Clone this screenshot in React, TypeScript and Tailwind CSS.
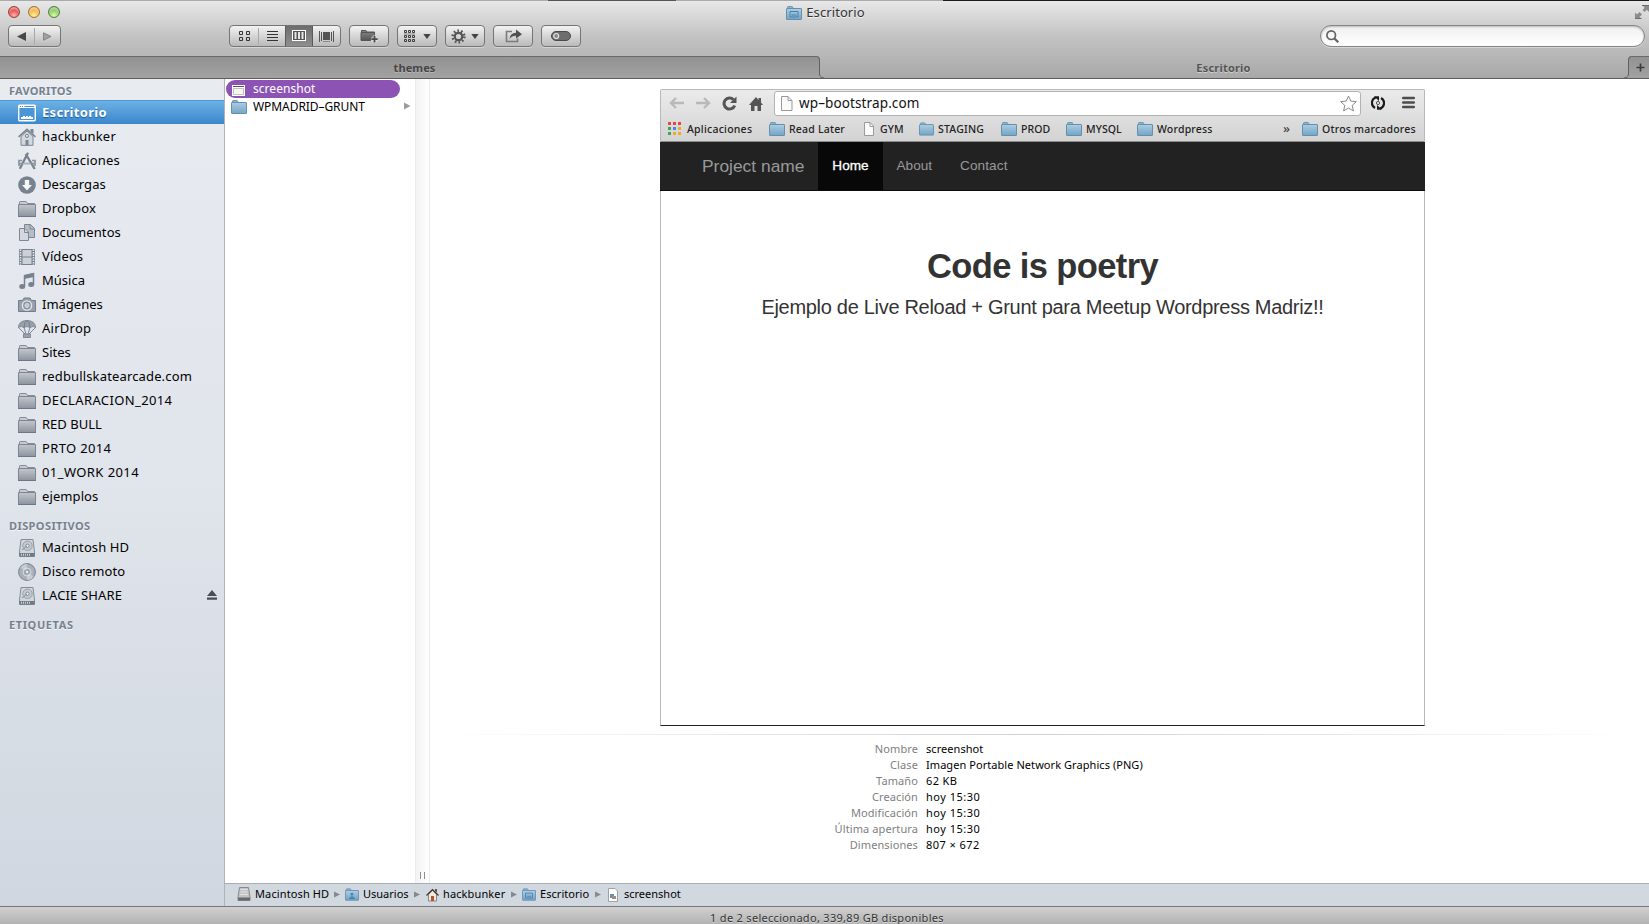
import type { ReactNode } from "react";

const UI = "font-['Noto_Sans','Open_Sans',sans-serif]";
const HELV = "font-['Liberation_Sans',Arial,sans-serif]";

function Gradients() {
  return (
    <svg className="absolute h-0 w-0" aria-hidden="true">
      <defs>
        <linearGradient id="steel" x1="0" y1="0" x2="0" y2="1">
          <stop offset="0" stopColor="#c3c7cd" />
          <stop offset="1" stopColor="#8d949e" />
        </linearGradient>
        <linearGradient id="sky" x1="0" y1="0" x2="0" y2="1">
          <stop offset="0" stopColor="#abcde3" />
          <stop offset="1" stopColor="#74a4c5" />
        </linearGradient>
        <linearGradient id="ink" x1="0" y1="0" x2="0" y2="1">
          <stop offset="0" stopColor="#888" />
          <stop offset="1" stopColor="#555" />
        </linearGradient>
        <linearGradient id="tab" x1="0" y1="0" x2="0" y2="1">
          <stop offset="0" stopColor="#929292" />
          <stop offset="1" stopColor="#a2a2a2" />
        </linearGradient>
      </defs>
    </svg>
  );
}

function Icon({ w = 18, h = 18, vb, className = "", children }: { w?: number; h?: number; vb?: string; className?: string; children: ReactNode }) {
  return (
    <svg width={w} height={h} viewBox={vb ?? `0 0 ${w} ${h}`} fill="none" className={`shrink-0 ${className}`}>
      {children}
    </svg>
  );
}

/* Sidebar icons */
const GreyFolder = () => (
  <Icon>
    <path d="M1.500 4V2.200Q1.500 1.500 2.200 1.500H7.800Q8.500 1.500 8.800 2.300L9.500 3.500H16.500V5H1.500Z" fill="#c7cbd1" stroke="#848b96" />
    <path d="M.5 4.500H17.500V16.500H.5Z" fill="url(#steel)" stroke="#7f8692" />
    <path d="M0 16.500H18" stroke="#6e7785" />
  </Icon>
);
const DesktopIcon = () => (
  <Icon>
    <rect x=".7" y="1.200" width="16.600" height="15.600" rx="1" fill="#4a96d6" stroke="#fff" strokeWidth="1.400" />
    <path d="M1 2.800H17" stroke="#fff" strokeWidth="2.400" />
    <path d="M2 2.500h1M4 2.500h1M6.500 2.500h9.500" stroke="#4c8fc9" strokeWidth="1" />
    <path d="M3 15V13H5V12H7V13H8V12H10V13H11V12H13V13H15V15Z" fill="#fff" />
  </Icon>
);
const HomeIcon = () => (
  <Icon>
    <path d="M3 8.500V17.300H15V8.500L9 3Z" fill="#d3d7de" stroke="#7d8693" />
    <path d="M.6 8.900L9 1.400L17.400 8.900" stroke="#7d8693" strokeWidth="1.600" />
    <path d="M12.500 1H15.500V6L12.500 3.500Z" fill="#7d8693" />
    <circle cx="9" cy="7.900" r="1.600" stroke="#7d8693" fill="#dde1e7" />
    <path d="M7.500 17.500V12H10.500V17.500Z" fill="#7d8693" />
  </Icon>
);
const AppsIcon = () => (
  <Icon>
    <path d="M10 .8L1.800 16.800M7.700 2L16.700 17" stroke="#78818e" strokeWidth="2.300" />
    <path d="M1 14V8.500H4M14 8.500H17V14M.8 11.500H17" stroke="#8b939f" strokeWidth="1.700" />
    <path d="M5 12H13" stroke="#c8cdd4" strokeWidth="1" />
  </Icon>
);
const DownIcon = () => (
  <Icon>
    <circle cx="9" cy="9" r="8.800" fill="#78818e" />
    <path d="M6.800 4H11.200V9H14L9 14.500L4 9H6.800Z" fill="#f4f6f8" />
  </Icon>
);
const DocsIcon = () => (
  <Icon>
    <path d="M6.500 .5H12.500L16.500 4.500V13.500H6.500Z" fill="#b7bdc6" stroke="#7d8693" />
    <path d="M12 .5V5H16.500" stroke="#7d8693" />
    <path d="M1.500 4.500H7L10.500 8V16.500H1.500Z" fill="#d4d8de" stroke="#7d8693" />
    <path d="M6.500 4.500V8.500H10.500" stroke="#7d8693" />
  </Icon>
);
const FilmIcon = () => (
  <Icon>
    <rect x="1" y="1" width="16" height="16" fill="#79818d" />
    <path d="M2.500 1.500V17M15.500 1.500V17" stroke="#e6e9ee" strokeWidth="1.600" strokeDasharray="1.500 1" />
    <path d="M4.500 2H13.500V8.500H4.500ZM4.500 9.500H13.500V16H4.500Z" fill="#ccd1d8" />
  </Icon>
);
const MusicIcon = () => (
  <Icon>
    <path d="M6.500 14V3.800L15.500 1.800V12" stroke="#78818e" strokeWidth="1.500" />
    <path d="M6 3L16 .8V5L6 7Z" fill="#78818e" />
    <ellipse cx="4.200" cy="14.400" rx="3" ry="2.500" fill="#78818e" />
    <ellipse cx="13.200" cy="12.400" rx="3" ry="2.500" fill="#78818e" />
  </Icon>
);
const CameraIcon = () => (
  <Icon>
    <path d="M.5 4.500H4.500L6 2H12L13.500 4.500H17.500V15.500H.5Z" fill="#98a0ab" stroke="#747d8a" />
    <circle cx="9" cy="9.500" r="4.600" fill="#87909c" stroke="#e4e8ed" strokeWidth="1.400" />
    <circle cx="9" cy="9.500" r="2.200" fill="#c2c8d0" stroke="#e4e8ed" strokeWidth=".6" />
  </Icon>
);
const AirDropIcon = () => (
  <Icon>
    <path d="M.3 7.500Q1 .5 9 .5Q17 .5 17.700 7.500Q15 5.500 12 7.500Q9 5.500 6 7.500Q3 5.500 .3 7.500Z" fill="#98a0ab" stroke="#737c89" strokeWidth=".8" />
    <path d="M6 7.500Q6 2 9 .5Q12 2 12 7.500M.5 7.500L7 14M17.500 7.500L11 14M6 7.500L8 14M12 7.500L10 14" stroke="#737c89" strokeWidth=".9" />
    <rect x="5.500" y="14" width="7" height="3.500" fill="#9aa2ad" stroke="#737c89" strokeWidth=".8" />
  </Icon>
);
const DriveIcon = () => (
  <Icon>
    <path d="M3 .5H15L16.500 13V17.500H1.500V13Z" fill="#d2d6dc" stroke="#848c98" />
    <path d="M1.500 14H16.500V17.500H1.500Z" fill="#707986" />
    <path d="M3 15.700H12" stroke="#cfd4da" strokeWidth="2" strokeDasharray="1 1" />
    <circle cx="9.500" cy="6.800" r="4.700" fill="#c4c9d1" stroke="#9aa1ab" />
    <circle cx="9.500" cy="6.800" r="1.700" fill="#e9ecef" stroke="#868e9a" />
    <path d="M4 11L9 7" stroke="#868e9a" />
  </Icon>
);
const DiscIcon = () => (
  <Icon>
    <circle cx="9" cy="9" r="8.400" fill="#a9b0ba" stroke="#78818e" />
    <path d="M9 9L2.500 4.500Q5 1 9 1ZM9 9L15.500 13.500Q13 17 9 17Z" fill="#c8cdd4" />
    <circle cx="9" cy="9" r="4" stroke="#dfe3e8" strokeWidth=".8" />
    <circle cx="9" cy="9" r="2" fill="#e6e9ed" stroke="#78818e" strokeWidth=".8" />
  </Icon>
);

/* Folder used across the columns, bookmarks and path bar */
function BlueFolder({ w = 16, h = 14, mark }: { w?: number; h?: number; mark?: "desk" | "user" }) {
  return (
    <Icon w={w} h={h} vb="0 0 16 14">
      <path d="M1.500 3V1.200Q1.500 .5 2.200 .5H5.800Q6.500 .5 6.700 1.300L7 2.500H14.500V4H1.500Z" fill="#8db5cf" stroke="#6c96b3" />
      <rect x=".5" y="2.500" width="15" height="11" rx=".5" fill="url(#sky)" stroke="#648fad" />
      <path d="M1 3.500H15" stroke="#a9cbe0" />
      {mark === "desk" && <path d="M4 5.500H12V11H4ZM5.500 9H10.500" stroke="#4883ab" />}
      {mark === "user" && <path d="M8 5A1.700 1.700 0 1 1 7.900 5ZM4.500 12Q5 9 8 9Q11 9 11.500 12Z" fill="#4c85ab" />}
    </Icon>
  );
}
const PageIcon = () => (
  <Icon w={12} h={14}>
    <path d="M1.500 .5H7L10.500 4V13.500H1.500Z" fill="#fbfbfb" stroke="#9a9a9a" />
    <path d="M7 .5V4.500H10.500" stroke="#9a9a9a" />
  </Icon>
);
const Arrow = () => (
  <Icon w={6} h={7}>
    <path d="M0 .5L6 3.500L0 6.500Z" fill="#858a91" />
  </Icon>
);

const FAVORITES: [ReactNode, string, string][] = [
  [<HomeIcon />, "hackbunker", "tracking-[0.17px]"],
  [<AppsIcon />, "Aplicaciones", "tracking-[0.2px]"],
  [<DownIcon />, "Descargas", "tracking-[0.05px]"],
  [<GreyFolder />, "Dropbox", "tracking-[0.15px]"],
  [<DocsIcon />, "Documentos", "tracking-[0.1px]"],
  [<FilmIcon />, "Vídeos", "tracking-[0.1px]"],
  [<MusicIcon />, "Música", ""],
  [<CameraIcon />, "Imágenes", ""],
  [<AirDropIcon />, "AirDrop", "tracking-[0.25px]"],
  [<GreyFolder />, "Sites", ""],
  [<GreyFolder />, "redbullskatearcade.com", "tracking-[0.15px]"],
  [<GreyFolder />, "DECLARACION_2014", "tracking-[0.38px]"],
  [<GreyFolder />, "RED BULL", ""],
  [<GreyFolder />, "PRTO 2014", "tracking-[0.35px]"],
  [<GreyFolder />, "01_WORK 2014", "tracking-[0.42px]"],
  [<GreyFolder />, "ejemplos", "tracking-[0.1px]"],
];

function SideRow({ icon, label, track = "", eject }: { icon: ReactNode; label: string; track?: string; eject?: boolean }) {
  return (
    <li className="flex h-6 items-center pl-[18px] pr-[7px] text-[13px] text-black">
      <span className="-mt-px flex">{icon}</span>
      <span className={`ml-1.5 flex-1 whitespace-nowrap ${track}`}>{label}</span>
      {eject && (
        <Icon w={10} h={10} className="-mt-0.5">
          <path d="M5 0L10 6H0ZM0 7.500H10V9.700H0Z" fill="#4b4e53" />
        </Icon>
      )}
    </li>
  );
}

function SideHeader({ children, className = "" }: { children: ReactNode; className?: string }) {
  return <h2 className={`pl-[9px] text-[11px] font-bold text-[#76818f] [text-shadow:0_1px_0_#f5f7fa] ${className}`}>{children}</h2>;
}

function Sidebar() {
  return (
    <aside className="w-[225px] shrink-0 border-r border-[#b0b3b8] bg-linear-to-b from-[#e8ecf1] via-[#e0e4eb] to-[#d0d7e0]">
      <SideHeader className="h-[21px] leading-[24px] tracking-[0.2px]">FAVORITOS</SideHeader>
      <div className="flex h-6 items-center border-t border-[#4a9ad6] bg-linear-to-b from-[#6cb1e5] to-[#3a87cd] pl-[18px]">
        <DesktopIcon />
        <span className="ml-1.5 text-[13px] font-bold tracking-[0.32px] text-white [text-shadow:0_1px_1px_#1d5b96]">Escritorio</span>
      </div>
      <ul className="pt-px">
        {FAVORITES.map(([icon, label, track]) => (
          <SideRow key={label} icon={icon} label={label} track={track} />
        ))}
      </ul>
      <SideHeader className="h-[27px] leading-[34px] tracking-[0.4px]">DISPOSITIVOS</SideHeader>
      <ul>
        <SideRow icon={<DriveIcon />} label="Macintosh HD" track="tracking-[0.08px]" />
        <SideRow icon={<DiscIcon />} label="Disco remoto" track="tracking-[0.15px]" />
        <SideRow icon={<DriveIcon />} label="LACIE SHARE" track="tracking-[0.15px]" eject />
      </ul>
      <SideHeader className="h-[27px] leading-[34px] tracking-[0.6px]">ETIQUETAS</SideHeader>
    </aside>
  );
}

const BTN = "flex h-[22px] items-center justify-center rounded-[4px] border border-[#757575] bg-linear-to-b from-[#f3f3f3] to-[#bababa] shadow-[0_1px_0_#d6d6d6]";

const Caret = () => (
  <Icon w={8} h={5}>
    <path d="M.3 0H7.700L4 5Z" fill="#444" />
  </Icon>
);

function Toolbar() {
  return (
    <div className="flex h-[22px] pl-2 pr-1">
      <div className={`${BTN} w-[53px]`}>
        <Icon w={9} h={9}><path d="M9 0V9L0 4.500Z" fill="#474747" /></Icon>
        <div className="mx-[8px] h-4 w-px bg-[#a8a8a8]" />
        <Icon w={9} h={9}><path d="M.5 .8V8.200L8 4.500Z" fill="#a0a0a0" stroke="#858585" /></Icon>
      </div>
      <div className={`${BTN} ml-[168px] w-[112px] !justify-start overflow-hidden`}>
        <div className="flex w-[28px] justify-center pl-[2px]">
          <Icon w={12} h={11}>
            <path d="M.5 .5H3.500V3.500H.5ZM7.500 .5H10.500V3.500H7.500ZM.5 6.500H3.500V9.500H.5ZM7.500 6.500H10.500V9.500H7.500Z" stroke="#333" />
          </Icon>
        </div>
        <div className="h-4 w-px bg-[#a8a8a8]" />
        <div className="flex w-[26px] justify-center">
          <Icon w={11} h={10}><path d="M0 .5H11M0 3.500H11M0 6.500H11M0 9.500H11" stroke="#333" /></Icon>
        </div>
        <div className="flex h-full w-[28px] items-center justify-center border-x border-[#5a5a5a] bg-linear-to-b from-[#6c6c6c] to-[#8f8f8f]">
          <Icon w={14} h={12}>
            <rect x=".5" y=".5" width="13" height="10" fill="#555" stroke="#fff" />
            <path d="M3.500 2V9M7 2V9M10.500 2V9" stroke="#e6e6e6" strokeWidth="2" />
          </Icon>
        </div>
        <div className="flex flex-1 justify-center">
          <Icon w={15} h={11}>
            <path d="M.5 0V11M2.500 1V10M12.500 1V10M14.500 0V11" stroke="#555" />
            <rect x="4" y="1" width="7" height="8" fill="#555" />
            <path d="M4 10.500H11" stroke="#888" />
          </Icon>
        </div>
      </div>
      <div className={`${BTN} ml-2 w-10`}>
        <Icon w={18} h={14}>
          <path d="M1.500 3V1.500H6L7 3H14.500V6M1 3.500H14.500V11.500H1Z" fill="url(#ink)" stroke="#555" />
          <path d="M14.500 6.500V14M11 10.200H18" stroke="#ddd" strokeWidth="3.600" />
          <path d="M14.500 7V13.500M11.300 10.200H17.700" stroke="#4a4a4a" strokeWidth="1.800" />
        </Icon>
      </div>
      <div className={`${BTN} ml-2 w-10 gap-[7px]`}>
        <Icon w={12} h={12}>
          <path d="M.5 .5H2.500V2.500H.5ZM4.500 .5H6.500V2.500H4.500ZM8.500 .5H10.500V2.500H8.500ZM.5 5.500H2.500V7.500H.5ZM4.500 5.500H6.500V7.500H4.500ZM8.500 5.500H10.500V7.500H8.500ZM.5 9.500H2.500V11.500H.5ZM4.500 9.500H6.500V11.500H4.500ZM8.500 9.500H10.500V11.500H8.500Z" stroke="#3c3c3c" />
          <path d="M0 4H11" stroke="#777" strokeWidth=".8" />
        </Icon>
        <Caret />
      </div>
      <div className={`${BTN} ml-2 w-10 gap-[5px]`}>
        <Icon w={15} h={15}>
          <circle cx="7.500" cy="7.500" r="3.700" stroke="#555" strokeWidth="2.200" />
          <circle cx="7.500" cy="7.500" r="5.800" stroke="#555" strokeWidth="2.600" strokeDasharray="1.600 2.044" />
        </Icon>
        <Caret />
      </div>
      <div className={`${BTN} ml-2 w-10`}>
        <Icon w={17} h={14}>
          <path d="M7 2.500H1.500V12.500H12.500V9.500" stroke="#7b7b7b" strokeWidth="1.600" />
          <path d="M4.500 10Q5 4 11 3.700V.5L17 5.200L11 9.500V6.700Q7 6.500 4.500 10Z" fill="#505050" />
        </Icon>
      </div>
      <div className={`${BTN} ml-2 w-10`}>
        <Icon w={20} h={10}>
          <rect x=".5" y=".5" width="19" height="9" rx="4.500" fill="#6e6e6e" stroke="#4a4a4a" />
          <circle cx="5.200" cy="5" r="2.500" fill="#8a8a8a" stroke="#e3e3e3" strokeWidth="1.200" />
        </Icon>
      </div>
      <div className="ml-auto flex h-[22px] w-[325px] items-center rounded-full border border-[#858585] bg-linear-to-b from-[#f0f0f0] to-white pl-[5px] shadow-[0_1px_0_#d6d6d6,inset_0_1px_2px_#bbb]">
        <Icon w={13} h={13}>
          <circle cx="5.200" cy="5.200" r="4.300" stroke="#646464" strokeWidth="1.700" />
          <path d="M8.200 8.200L12.300 12.300" stroke="#646464" strokeWidth="2.200" />
        </Icon>
      </div>
    </div>
  );
}

function WindowHeader() {
  return (
    <header className="flex h-[79px] shrink-0 flex-col border-b border-[#5d5d5d] bg-linear-to-b from-[#e9e9e9] via-[#c4c4c4] via-45% to-[#a8a8a8]">
      <div className="flex h-px shrink-0">
        <div className="w-[548px] bg-[#aaa]" />
        <div className="w-[128px] bg-[#555]" />
        <div className="w-[267px] bg-[#aaa]" />
        <div className="flex-1 bg-[#1d1a1b]" />
      </div>
      <div className="grid h-6 shrink-0 grid-cols-[1fr_auto_1fr] items-start">
        <div className="flex gap-2 pl-2 pt-[5px]">
          <span className="h-3 w-3 rounded-full border border-[#98403e] bg-[radial-gradient(circle_at_50%_85%,#ffb5ad,#e2463f_60%,#b52b28)] shadow-[inset_0_2px_2px_#ffffff90]" />
          <span className="h-3 w-3 rounded-full border border-[#a3712c] bg-[radial-gradient(circle_at_50%_85%,#fff0a0,#f0b040_60%,#c88320)] shadow-[inset_0_2px_2px_#ffffff90]" />
          <span className="h-3 w-3 rounded-full border border-[#4e7d3c] bg-[radial-gradient(circle_at_50%_85%,#dcffad,#83c45a_60%,#4f9238)] shadow-[inset_0_2px_2px_#ffffff90]" />
        </div>
        <div className="flex items-center gap-[4px] pl-[2px]">
          <BlueFolder w={16} h={14} mark="desk" />
          <h1 className="text-[13px] leading-[23px] tracking-[0.08px] text-[#333] [text-shadow:0_1px_0_#f4f4f4]">Escritorio</h1>
        </div>
        <div className="flex justify-end pt-1">
          <Icon w={14} h={14}>
            <path d="M7 0H14V7L11.800 4.800L9.500 7L7.500 5L9.700 2.700Z" fill="#8b8b8b" />
            <path d="M0 14V7.500L2 9.500L4.500 7L7 9.500L4.500 12L6.500 14Z" fill="#8b8b8b" />
            <path d="M7 .5H14M0 13.500H6.500" stroke="#6c6c6c" />
          </Icon>
        </div>
      </div>
      <Toolbar />
      <div className="mt-auto flex h-[22px] text-[11px] font-bold leading-[22px] text-[#454545]">
        <div className="w-[816px] border-t border-[#6a6a6a] bg-linear-to-b from-[#929292] to-[#a2a2a2] pl-[13px] text-center leading-[21px] tracking-[0.1px] [text-shadow:0_1px_0_#b8b8b8]">themes</div>
        <Icon w={9} h={22}>
          <path d="M0 0H1Q4 0 4 4V18Q4 22 8 22H0Z" fill="url(#tab)" />
          <path d="M0 .5H0.500Q3.500 .5 3.500 4V18Q3.500 21.500 8 22" stroke="#606060" />
        </Icon>
        <div className="flex-1 pr-px pt-px text-center leading-[21px] tracking-[0.2px] text-[#555] [text-shadow:0_1px_0_#cfcfcf]">Escritorio</div>
        <Icon w={9} h={22}>
          <path d="M9 0H8Q5 0 5 4V18Q5 22 1 22H9Z" fill="url(#tab)" />
          <path d="M9 .5H8.500Q5.500 .5 5.500 4V18Q5.500 21.500 1 22" stroke="#606060" />
        </Icon>
        <div className="flex w-[17px] items-center border-t border-[#6a6a6a] bg-linear-to-b from-[#929292] to-[#a2a2a2] pl-[4px]">
          <Icon w={9} h={9} className="-mt-px"><path d="M4.500 .5V8.500M.5 4.500H8.500" stroke="#3d3d3d" strokeWidth="1.700" /></Icon>
        </div>
      </div>
    </header>
  );
}

function FileColumn() {
  return (
    <div className="flex shrink-0">
      <ul className="w-[190px] pt-px text-[12px] text-black">
        <li className="ml-px flex h-[18px] w-[174px] items-center rounded-full bg-[#8c53b5] pl-[6px] text-white">
          <Icon w={13} h={11} className="mt-0.5">
            <rect x="0" y="0" width="13" height="11" fill="#fff" />
            <path d="M1 1.500H12" stroke="#5d5366" />
            <path d="M1.500 9.500V3.500H11.500V9.500Z" fill="#f6f4f3" stroke="#b9b2b5" strokeWidth=".8" />
          </Icon>
          <span className="ml-2 tracking-[0.05px]">screenshot</span>
        </li>
        <li className="flex h-[18px] items-center pl-[6px]">
          <BlueFolder w={16} h={14} />
          <span className="ml-1.5 flex-1 whitespace-nowrap tracking-[-0.07px]">WPMADRID–GRUNT</span>
          <Icon w={7} h={8} className="mb-[3px] mr-[4px]"><path d="M0 .5L6.500 4L0 7.500Z" fill="#9c9c9c" /></Icon>
        </li>
      </ul>
      <div className="flex w-[15px] items-end justify-center gap-[3px] border-x border-[#ebebeb] bg-linear-to-r from-[#f3f3f3] to-white pb-[4px]">
        <span className="h-[7px] w-px bg-[#8d8d8d]" />
        <span className="h-[7px] w-px bg-[#8d8d8d]" />
      </div>
    </div>
  );
}

function Bookmark({ icon, label, className }: { icon: ReactNode; label: string; className: string }) {
  return (
    <span className={`flex shrink-0 items-center gap-[4px] whitespace-nowrap ${className}`}>
      {icon}
      <span className="pt-0.5">{label}</span>
    </span>
  );
}

function BrowserPreview() {
  return (
    <div className="ml-[230px] mt-[10px] flex h-[637px] w-[765px] flex-col rounded-t-[2px] border border-[#b9b9b9] border-b-[#18241a] bg-white">
      <div className="h-[52px] shrink-0 border-b border-[#8c8c8c] bg-linear-to-b from-[#ebebeb] to-[#d3d3d3]">
        <div className="flex h-[26px] items-center">
          <Icon w={15} h={12} className="ml-[8px]"><path d="M15 6H2M7 1L2 6L7 11" stroke="#b9b9b9" strokeWidth="2.400" /></Icon>
          <Icon w={15} h={12} className="ml-3"><path d="M0 6H13M8 1L13 6L8 11" stroke="#b9b9b9" strokeWidth="2.400" /></Icon>
          <Icon w={15} h={15} className="ml-[11px]">
            <path d="M12.700 9.500A5.500 5.500 0 1 1 11.500 3.700" stroke="#555" strokeWidth="3" />
            <path d="M14.500 .5V7H8Z" fill="#555" />
          </Icon>
          <Icon w={14} h={15} className="ml-3">
            <path d="M0 9L7 1L9.500 4V2H12V6.500L14 9H12V15H8.500V10H5.500V15H2V9Z" fill="#555" />
          </Icon>
          <div className="ml-[11px] flex h-[25px] w-[587px] items-center rounded-[3px] border border-[#b2b2b2] bg-white pl-[6px]">
            <Icon w={12} h={15}>
              <path d="M.5 .5H7L11 4.500V14.500H.5Z" fill="#fafafa" stroke="#999" />
              <path d="M7 .5V4.500H11" stroke="#999" />
            </Icon>
            <span className="ml-[6px] flex-1 text-[13.500px] tracking-[0.12px] text-[#111]">wp–bootstrap.com</span>
            <Icon w={17} h={17} className="mr-[3px]">
              <path d="M8.500 1L10.800 6.100L16.300 6.700L12.200 10.400L13.400 15.900L8.500 13.100L3.600 15.900L4.800 10.400L.7 6.700L6.200 6.100Z" stroke="#888" strokeLinejoin="round" />
            </Icon>
          </div>
          <Icon w={14} h={14} className="-mt-px ml-[10px]">
            <path d="M5 1.500A5.700 5.700 0 0 0 4 12M9 12.500A5.700 5.700 0 0 0 10 2" stroke="#1c1c1c" strokeWidth="2.200" />
            <path d="M3 .3H8V5ZM11 13.700H6V9Z" fill="#1c1c1c" />
            <circle cx="7" cy="7" r="1.600" stroke="#555" />
          </Icon>
          <Icon w={13} h={13} className="-mt-px ml-[17px]"><path d="M1.200 2H11.800M1.200 6.500H11.800M1.200 11H11.800" stroke="#4d4d4d" strokeWidth="2.600" strokeLinecap="round" /></Icon>
        </div>
        <div className="flex h-[25px] items-center pl-[7px] text-[10.500px] font-medium tracking-[0.08px] text-[#222]">
          <Bookmark
            className="w-[101px] !gap-[6px] tracking-[0.24px]"
            label="Aplicaciones"
            icon={
              <Icon w={13} h={13}>
                <path d="M0 1.500H3M5 1.500H8M10 1.500H13" stroke="#e8453c" strokeWidth="3" />
                <path d="M0 6.500H3" stroke="#3aa757" strokeWidth="3" />
                <path d="M5 6.500H8" stroke="#4688f1" strokeWidth="3" />
                <path d="M10 6.500H13M5 11.500H8M10 11.500H13" stroke="#f0a928" strokeWidth="3" />
                <path d="M0 11.500H3" stroke="#3aa757" strokeWidth="3" />
              </Icon>
            }
          />
          <Bookmark className="w-[94px] tracking-[0.2px]" icon={<BlueFolder />} label="Read Later" />
          <Bookmark className="w-[56px] !gap-[5px]" icon={<PageIcon />} label="GYM" />
          <Bookmark className="w-[82px] tracking-[0.2px]" icon={<BlueFolder w={15} />} label="STAGING" />
          <Bookmark className="w-[65px]" icon={<BlueFolder />} label="PROD" />
          <Bookmark className="w-[71px]" icon={<BlueFolder />} label="MYSQL" />
          <Bookmark className="w-[146px] tracking-[0.2px]" icon={<BlueFolder />} label="Wordpress" />
          <span className="w-[19px] shrink-0 pb-[1px] text-[13px] leading-none text-[#444]">»</span>
          <Bookmark className="w-[120px] tracking-[0.22px]" icon={<BlueFolder />} label="Otros marcadores" />
        </div>
      </div>
      <nav className={`-mx-px flex h-[49px] shrink-0 items-center border-b border-[#0c0c0c] bg-[#222] pl-[42px] text-[13.600px] text-[#999] ${HELV}`}>
        <span className="w-[116px] whitespace-nowrap text-[17.400px]">Project name</span>
        <span className="flex h-full w-[65px] items-center justify-center bg-[#080808] pt-px text-white [-webkit-text-stroke:0.3px_white]">Home</span>
        <span className="ml-[13.500px] w-[63.500px] pt-px">About</span>
        <span className="pt-px tracking-[0.1px]">Contact</span>
      </nav>
      <div className={`pt-[52px] text-center text-[#333] ${HELV}`}>
        <h2 className="text-[34.500px] font-bold leading-[46px] tracking-[-0.6px]">Code is poetry</h2>
        <p className="text-[20px] leading-[36px] tracking-[-0.3px]">Ejemplo de Live Reload + Grunt para Meetup Wordpress Madriz!!</p>
      </div>
    </div>
  );
}

const INFO = [
  ["Nombre", "screenshot", "tracking-[0.05px]"],
  ["Clase", "Imagen Portable Network Graphics (PNG)", "tracking-[0.06px]"],
  ["Tamaño", "62 KB", "tracking-[0.35px]"],
  ["Creación", "hoy 15:30", "tracking-[0.5px]"],
  ["Modificación", "hoy 15:30", "tracking-[0.5px]"],
  ["Última apertura", "hoy 15:30", "tracking-[0.5px]"],
  ["Dimensiones", "807 × 672", "tracking-[0.45px]"],
];

function PreviewPane() {
  return (
    <main className="min-w-0 flex-1 bg-white">
      <BrowserPreview />
      <div className="ml-[10px] mr-[20px] mt-[8px] h-px bg-linear-to-r from-white via-[#d0d0d0] to-white" />
      <dl className="mt-[6px] grid grid-cols-[488px_1fr] gap-x-[8px] text-[11px] leading-4">
        {INFO.map(([k, v, track]) => (
          <div key={k} className="contents">
            <dt className="text-right tracking-[0.1px] text-[#808080]">{k}</dt>
            <dd className={`text-black ${track}`}>{v}</dd>
          </div>
        ))}
      </dl>
    </main>
  );
}

function PathBar() {
  return (
    <div className="flex h-[23px] shrink-0 items-center border-t border-[#a9aeb5] bg-[#d1d8e0] pb-[2px] pl-[12px] text-[11px] text-black">
      <Icon w={14} h={14}>
        <path d="M2.500 .5H11.500L13 10V13.500H1V10Z" fill="#c3c3c3" stroke="#8a8a8a" />
        <path d="M1 10.500H13V13.500H1Z" fill="#6a6a6a" />
        <path d="M3.500 2.500H10.500M3.500 5H10.500M3 7.500H11" stroke="#e2e2e2" />
      </Icon>
      <span className="ml-1 w-[79px] whitespace-nowrap tracking-[0.12px]">Macintosh HD</span>
      <Arrow />
      <div className="ml-[5px] mt-px"><BlueFolder w={14} h={13} mark="user" /></div>
      <span className="ml-[4px] w-[51px] whitespace-nowrap">Usuarios</span>
      <Arrow />
      <Icon w={13} h={14} className="ml-[6px] mt-px">
        <path d="M2.500 6.500V13H10.500V6.500L6.500 2.500Z" fill="#efe9de" stroke="#77706a" strokeWidth=".8" />
        <path d="M.5 7.500L6.500 1.500L12.500 7.500" stroke="#3c3531" strokeWidth="1.200" />
        <path d="M9 1H11V4.500L9 3Z" fill="#7a4b3a" />
        <path d="M5 13V8H8V13Z" fill="#b4562a" />
      </Icon>
      <span className="ml-1 w-[68px] whitespace-nowrap tracking-[0.12px]">hackbunker</span>
      <Arrow />
      <div className="ml-[5px] mt-px"><BlueFolder w={14} h={13} mark="desk" /></div>
      <span className="ml-1 w-[55px] whitespace-nowrap tracking-[0.05px]">Escritorio</span>
      <Arrow />
      <Icon w={12} h={14} className="ml-[6px] mt-px">
        <path d="M1.500 .5H8L10.500 3V13.500H1.500Z" fill="#fff" stroke="#a1a1a1" />
        <path d="M3 6H7V10H3Z" fill="#6a8fb5" />
        <path d="M5 8H9V11H5Z" fill="#a08d84" />
      </Icon>
      <span className="ml-[5px]">screenshot</span>
    </div>
  );
}

export default function App() {
  return (
    <div className={`relative flex h-[924px] w-[1649px] flex-col overflow-hidden bg-white ${UI}`}>
      <Gradients />
      <WindowHeader />
      <div className="flex h-[827px] shrink-0">
        <Sidebar />
        <div className="flex min-w-0 flex-1 flex-col">
          <div className="flex min-h-0 flex-1">
            <FileColumn />
            <PreviewPane />
          </div>
          <PathBar />
        </div>
      </div>
      <footer className="h-[18px] border-t border-[#777] bg-linear-to-b from-[#d0d0d0] to-[#b3b3b3] pl-[5px] pt-[5px] text-center text-[11px] leading-[11px] tracking-[0.3px] text-[#333] [text-shadow:0_1px_0_#dadada]">
        1 de 2 seleccionado, 339,89 GB disponibles
      </footer>
    </div>
  );
}
